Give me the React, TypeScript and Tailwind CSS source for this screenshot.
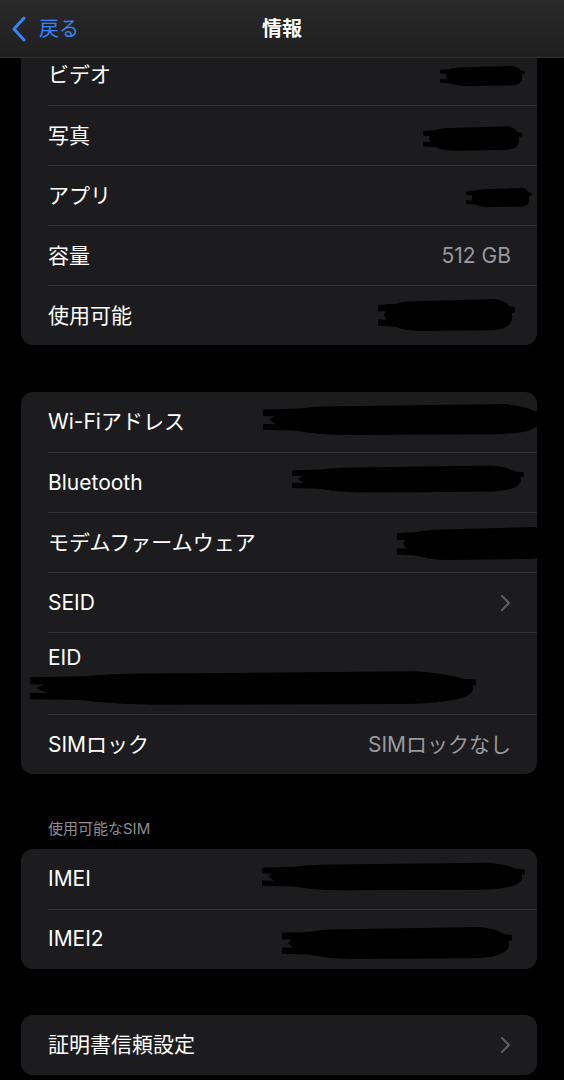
import React from 'react';

const font = { fontFamily: 'Inter, "Noto Sans CJK JP", sans-serif' };

interface ScribbleProps {
  w: number;
  h: number;
  className: string;
}

// hand-drawn marker blob used to hide values
const Scribble: React.FC<ScribbleProps> = ({ w, h, className }) => {
  const body = `M6 ${h * 0.5} Q ${w * 0.08} ${h * 0.12} ${w * 0.28} ${h * 0.14} L ${w * 0.86} ${h * 0.08} Q ${w - 2} ${h * 0.18} ${w - 3} ${h * 0.5} Q ${w - 1} ${h * 0.86} ${w * 0.84} ${h * 0.9} L ${w * 0.3} ${h * 0.92} Q ${w * 0.08} ${h * 0.9} 6 ${h * 0.5} Z`;
  return (
    <svg width={w} height={h} viewBox={`0 0 ${w} ${h}`} className={`absolute ${className}`}>
      <path d={body} fill="#000" />
      <path d={`M2 ${h * 0.32} L ${w * 0.2} ${h * 0.28}`} stroke="#000" strokeWidth={h * 0.18} strokeLinecap="round" />
      <path d={`M1 ${h * 0.7} L ${w * 0.2} ${h * 0.74}`} stroke="#000" strokeWidth={h * 0.16} strokeLinecap="round" />
      <path d={`M${w * 0.8} ${h * 0.3} L ${w - 2} ${h * 0.36}`} stroke="#000" strokeWidth={h * 0.16} strokeLinecap="round" />
    </svg>
  );
};

const Chevron = () => (
  <svg width="11" height="18" viewBox="0 0 11 18" className="shrink-0">
    <path d="M2 2l7 7-7 7" fill="none" stroke="#5b5b60" strokeWidth="2.2" strokeLinecap="round" strokeLinejoin="round" />
  </svg>
);

interface RowProps {
  label: string;
  first?: boolean;
  value?: string;
  chevron?: boolean;
  scribble?: ScribbleProps;
}

const Row: React.FC<RowProps> = ({ label, first, value, chevron, scribble }) => (
  <div className="relative h-[60px]">
    <div className={`ml-[27px] h-full flex items-center justify-between pr-[26px] ${first ? '' : 'border-t border-[#333336]'}`}>
      <span className="text-white text-[21px]">{label}</span>
      {value && <span className="text-[#98989e] text-[21px]">{value}</span>}
      {chevron && <Chevron />}
    </div>
    {scribble && <Scribble {...scribble} />}
  </div>
);

const Card: React.FC<{ children: React.ReactNode; className?: string }> = ({ children, className }) => (
  <div className={`ml-[21px] mr-[27px] bg-[#1c1c1e] rounded-[12px] overflow-hidden ${className ?? ''}`}>{children}</div>
);

export default function App() {
  return (
    <div className="relative w-[564px] h-[1080px] bg-black overflow-hidden" style={font}>
      {/* navigation bar over scrolled content */}
      <div className="absolute top-0 left-0 right-0 z-10 h-[58px] bg-gradient-to-b from-[#2a2a2a] to-[#1f1f1f] border-b border-[#303030] flex items-center justify-center">
        <div className="absolute left-[11px] top-0 h-full flex items-center gap-[12px]">
          <svg width="16" height="26" viewBox="0 0 16 26">
            <path d="M13 2L3 13l10 11" fill="none" stroke="#3a82f7" strokeWidth="3" strokeLinecap="round" strokeLinejoin="round" />
          </svg>
          <span className="text-[#3a82f7] text-[20px]">戻る</span>
        </div>
        <span className="text-white text-[20px] font-semibold">情報</span>
      </div>

      <div className="pt-[45px]">
        <Card>
          <Row first label="ビデオ" scribble={{ w: 85, h: 24, className: 'left-[419px] top-[19px]' }} />
          <Row label="写真" scribble={{ w: 99, h: 29, className: 'left-[402px] top-[19px]' }} />
          <Row label="アプリ" scribble={{ w: 66, h: 23, className: 'left-[445px] top-[21px]' }} />
          <Row label="容量" value="512 GB" />
          <Row label="使用可能" scribble={{ w: 137, h: 38, className: 'left-[357px] top-[11px]' }} />
        </Card>

        <Card className="mt-[47px]">
          <Row first label="Wi-Fiアドレス" scribble={{ w: 280, h: 37, className: 'left-[242px] top-[9px]' }} />
          <Row label="Bluetooth" scribble={{ w: 232, h: 32, className: 'left-[271px] top-[11px]' }} />
          <Row label="モデムファームウェア" scribble={{ w: 160, h: 39, className: 'left-[376px] top-[12px]' }} />
          <Row label="SEID" chevron />
          <div className="relative h-[82px]">
            <div className="ml-[27px] h-full border-t border-[#333336] pt-[9px]">
              <span className="text-white text-[21px]">EID</span>
            </div>
            <Scribble w={446} h={40} className="left-[9px] top-[36px]" />
          </div>
          <Row label="SIMロック" value="SIMロックなし" />
        </Card>

        <div className="mt-[44px] mb-[8px] pl-[48px] text-[15px] text-[#8e8e93]">使用可能なSIM</div>

        <Card>
          <Row first label="IMEI" scribble={{ w: 263, h: 33, className: 'left-[241px] top-[11px]' }} />
          <Row label="IMEI2" scribble={{ w: 230, h: 38, className: 'left-[261px] top-[15px]' }} />
        </Card>

        <Card className="mt-[46px]">
          <Row first label="証明書信頼設定" chevron />
        </Card>
      </div>
    </div>
  );
}
